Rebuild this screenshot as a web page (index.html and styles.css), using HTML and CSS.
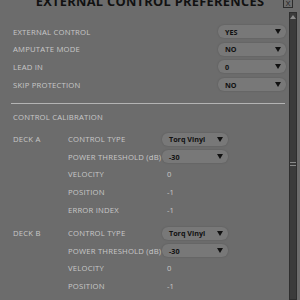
FILE: index.html
```html
<!DOCTYPE html>
<html>
<head>
<meta charset="utf-8">
<link rel="stylesheet" href="styles.css">
</head>
<body>
<div class="window">
  <div class="titlebar">
    <div class="title">EXTERNAL CONTROL PREFERENCES</div>
    <div class="close">X</div>
  </div>
  <div class="main">
    <div class="content">
      <div class="prefs">
        <div class="row"><span class="label">EXTERNAL CONTROL</span><div class="select wide"><span>YES</span><i class="arrow"></i></div></div>
        <div class="row"><span class="label">AMPUTATE MODE</span><div class="select wide"><span>NO</span><i class="arrow"></i></div></div>
        <div class="row"><span class="label">LEAD IN</span><div class="select wide"><span>0</span><i class="arrow"></i></div></div>
        <div class="row"><span class="label">SKIP PROTECTION</span><div class="select wide"><span>NO</span><i class="arrow"></i></div></div>
      </div>
      <div class="divider"></div>
      <div class="section">CONTROL CALIBRATION</div>
      <div class="deck">
        <div class="crow"><span class="label">DECK A</span><span class="label">CONTROL TYPE</span><div class="select narrow"><span>Torq Vinyl</span><i class="arrow"></i></div></div>
        <div class="crow"><span></span><span class="label">POWER THRESHOLD (dB)</span><div class="select narrow"><span>-30</span><i class="arrow"></i></div></div>
        <div class="crow"><span></span><span class="label">VELOCITY</span><span class="value">0</span></div>
        <div class="crow"><span></span><span class="label">POSITION</span><span class="value">-1</span></div>
        <div class="crow"><span></span><span class="label">ERROR INDEX</span><span class="value">-1</span></div>
      </div>
      <div class="deck deck-b">
        <div class="crow"><span class="label">DECK B</span><span class="label">CONTROL TYPE</span><div class="select narrow"><span>Torq Vinyl</span><i class="arrow"></i></div></div>
        <div class="crow"><span></span><span class="label">POWER THRESHOLD (dB)</span><div class="select narrow"><span>-30</span><i class="arrow"></i></div></div>
        <div class="crow"><span></span><span class="label">VELOCITY</span><span class="value">0</span></div>
        <div class="crow"><span></span><span class="label">POSITION</span><span class="value">-1</span></div>
      </div>
    </div>
    <div class="scrollbar">
      <div class="up"></div>
      <div class="thumb"><div class="grip"></div></div>
    </div>
  </div>
</div>
</body>
</html>
```
FILE: styles.css
```css
html, body {
  margin: 0;
  padding: 0;
  background: #6c6c6c;
  width: 300px;
  height: 300px;
  overflow: hidden;
}
.window {
  font-family: "Open Sans", "DejaVu Sans", sans-serif;
  color: #c8c8c8;
  width: 300px;
  height: 300px;
}
.titlebar {
  height: 12px;
  position: relative;
  display: flex;
  justify-content: center;
}
.title {
  font-size: 12.8px;
  font-weight: bold;
  color: #111;
  line-height: 12px;
  margin-top: -5px;
  letter-spacing: 0.3px;
}
.close {
  position: absolute;
  right: 7px;
  top: -3px;
  width: 8px;
  height: 9px;
  border: 1px solid #2c2c2c;
  font-size: 8px;
  line-height: 9px;
  text-align: center;
  color: #222;
}
.main {
  display: flex;
  height: 288px;
}
.content {
  flex: 1;
  padding-top: 11px;
}
.prefs {
  padding: 0 3px 0 13px;
}
.row {
  display: grid;
  grid-template-columns: 1fr 68px;
  align-items: center;
  height: 17.6px;
}
.label {
  font-size: 7.7px;
  letter-spacing: 0.2px;
  white-space: nowrap;
}
.select {
  height: 13px;
  border-radius: 6px;
  background: #787878;
  box-shadow: 0 0 2px rgba(0,0,0,0.2);
  display: flex;
  align-items: center;
  justify-content: space-between;
  padding: 0 5px 0 7px;
  box-sizing: border-box;
  color: #111;
  font-size: 7.2px;
  font-weight: bold;
}
.narrow {
  width: 66px;
}
.arrow {
  width: 0;
  height: 0;
  border-left: 3.5px solid transparent;
  border-right: 3.5px solid transparent;
  border-top: 5px solid #111;
}
.divider {
  height: 1px;
  background: #b4b4b4;
  margin: 10px 4px 0 11px;
}
.section {
  font-size: 7.7px;
  letter-spacing: 0.2px;
  margin-left: 13px;
  height: 17px;
  line-height: 17px;
  margin-top: 5px;
}
.deck {
  padding-left: 13px;
  margin-top: 4px;
}
.deck-b {
  margin-top: 6px;
}
.crow {
  display: grid;
  grid-template-columns: 55px 94px 66px;
  align-items: center;
  height: 17.6px;
}
.value {
  font-size: 7.7px;
  padding-left: 5px;
}
.scrollbar {
  width: 8px;
  margin-right: 3px;
  background: #3b3b3b;
  border: 1px solid #2e2e2e;
  box-sizing: border-box;
  position: relative;
}
.up {
  width: 0;
  height: 0;
  margin: 2px auto 0;
  border-left: 3px solid transparent;
  border-right: 3px solid transparent;
  border-bottom: 4px solid #8a8a8a;
}
.thumb {
  margin-top: 139px;
  height: 12px;
  display: flex;
  align-items: center;
  justify-content: center;
}
.grip {
  width: 6px;
  height: 4px;
  border-top: 1px solid #888;
  border-bottom: 1px solid #888;
  box-sizing: border-box;
}
```
